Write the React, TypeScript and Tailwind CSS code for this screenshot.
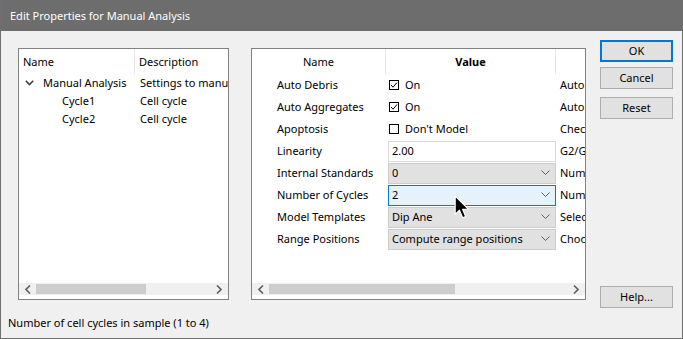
import React from 'react';

const font = { fontFamily: '"Noto Sans", "Liberation Sans", sans-serif' };

function Chevron() {
  return (
    <svg width="9" height="6" viewBox="0 0 9 6" className="shrink-0">
      <path d="M0.5 0.5 L4.5 4.5 L8.5 0.5" fill="none" stroke="#606060" strokeWidth="1" />
    </svg>
  );
}

function TreeChevron() {
  return (
    <svg width="9" height="6" viewBox="0 0 9 6" className="shrink-0">
      <path d="M0.8 0.8 L4.5 4.5 L8.2 0.8" fill="none" stroke="#404040" strokeWidth="1.6" />
    </svg>
  );
}

function CheckBox({ checked }: { checked: boolean }) {
  return (
    <svg width="10" height="10" viewBox="0 0 10 10" className="shrink-0">
      <rect x="0.5" y="0.5" width="9" height="9" fill="none" stroke="#000" strokeWidth="1" />
      {checked && <path d="M2 5 L4 7.2 L8 2.5" fill="none" stroke="#000" strokeWidth="1" />}
    </svg>
  );
}

function HScroll({ thumbLeft, thumbWidth }: { thumbLeft: number; thumbWidth: number }) {
  return (
    <div className="relative h-[12px] bg-[#f0f0f0] flex items-center justify-between px-[6px] shrink-0">
      <svg width="6" height="9" viewBox="0 0 6 9">
        <path d="M5 0.5 L1 4.5 L5 8.5" fill="none" stroke="#606060" strokeWidth="1.6" />
      </svg>
      <div
        className="absolute top-[1px] h-[10px] bg-[#cdcdcd]"
        style={{ left: thumbLeft, width: thumbWidth }}
      />
      <svg width="6" height="9" viewBox="0 0 6 9">
        <path d="M1 0.5 L5 4.5 L1 8.5" fill="none" stroke="#606060" strokeWidth="1.6" />
      </svg>
    </div>
  );
}

const props = [
  { name: 'Auto Debris', kind: 'check', checked: true, value: 'On', desc: 'Automatic' },
  { name: 'Auto Aggregates', kind: 'check', checked: true, value: 'On', desc: 'Automatic' },
  { name: 'Apoptosis', kind: 'check', checked: false, value: "Don't Model", desc: 'Check' },
  { name: 'Linearity', kind: 'text', value: '2.00', desc: 'G2/G1' },
  { name: 'Internal Standards', kind: 'select', value: '0', desc: 'Number' },
  { name: 'Number of Cycles', kind: 'active', value: '2', desc: 'Number' },
  { name: 'Model Templates', kind: 'select', value: 'Dip Ane', desc: 'Select' },
  { name: 'Range Positions', kind: 'select', value: 'Compute range positions', desc: 'Choose' },
];

function ValueCell({ p }: { p: (typeof props)[number] }) {
  if (p.kind === 'check') {
    return (
      <div className="flex items-center gap-[6px] pl-[2px] h-full">
        <CheckBox checked={!!p.checked} />
        <span>{p.value}</span>
      </div>
    );
  }
  if (p.kind === 'text') {
    return (
      <div className="h-[21px] mx-[1px] border border-[#d9d9d9] bg-white flex items-center pl-[3px]">
        {p.value}
      </div>
    );
  }
  const active = p.kind === 'active';
  return (
    <div
      className={
        active
          ? 'h-[21px] mx-[1px] border border-[#0078d7] bg-[#e5f1fb] flex items-center justify-between pl-[3px] pr-[5px]'
          : 'h-[21px] mx-[1px] border border-[#cccccc] bg-[#e1e1e1] flex items-center justify-between pl-[3px] pr-[5px]'
      }
    >
      <span className="whitespace-nowrap">{p.value}</span>
      <Chevron />
    </div>
  );
}

function Button({ label, primary }: { label: string; primary?: boolean }) {
  return (
    <div
      className={
        primary
          ? 'w-[73px] h-[22px] border-2 border-[#0078d7] bg-[#e1e1e1] flex items-center justify-center shrink-0'
          : 'w-[73px] h-[22px] border border-[#adadad] bg-[#e1e1e1] flex items-center justify-center shrink-0'
      }
    >
      {label}
    </div>
  );
}

export default function App() {
  return (
    <div
      className="relative w-[683px] h-[339px] bg-[#f0f0f0] border-l border-r border-b border-[#6f6f6f] flex flex-col text-[11px] leading-[16px] text-black overflow-hidden"
      style={font}
    >
      {/* Title bar */}
      <div className="h-[31px] bg-[#6d6d6d] text-white flex items-center pl-[9px] shrink-0 text-[11px]">
        Edit Properties for Manual Analysis
      </div>

      <div className="flex items-start pl-[17px] shrink-0">
        {/* Tree panel */}
        <div className="mt-[17px] w-[211px] h-[252px] shrink-0 border border-[#828282] bg-white flex flex-col overflow-hidden">
          <div className="flex h-[25px] shrink-0">
            <div className="w-[116px] shrink-0 border-r border-[#e5e5e5] flex items-center pl-[4px]">Name</div>
            <div className="flex items-center pl-[4px] whitespace-nowrap">Description</div>
          </div>
          <div className="flex h-[18px] items-center shrink-0">
            <div className="w-[117px] shrink-0 flex items-center pl-[6px] gap-[9px] whitespace-nowrap">
              <TreeChevron />
              <span>Manual Analysis</span>
            </div>
            <div className="pl-[4px] whitespace-nowrap">Settings to manual</div>
          </div>
          {['Cycle1', 'Cycle2'].map((c) => (
            <div key={c} className="flex h-[18px] items-center shrink-0">
              <div className="w-[117px] shrink-0 pl-[43px]">{c}</div>
              <div className="pl-[4px] whitespace-nowrap">Cell cycle</div>
            </div>
          ))}
          <div className="flex-1" />
          <HScroll thumbLeft={17} thumbWidth={110} />
          <div className="h-[4px] shrink-0" />
        </div>

        {/* Properties grid */}
        <div className="ml-[22px] mt-[17px] w-[335px] h-[252px] shrink-0 border border-[#828282] bg-white flex flex-col overflow-hidden">
          <div className="flex h-[25px] shrink-0">
            <div className="w-[134px] shrink-0 border-r border-[#e5e5e5] flex items-center justify-center">Name</div>
            <div className="w-[170px] shrink-0 border-r border-[#e5e5e5] flex items-center justify-center font-bold">Value</div>
          </div>
          {props.map((p) => (
            <div key={p.name} className="flex h-[22px] items-center shrink-0">
              <div className="w-[135px] shrink-0 pl-[25px] whitespace-nowrap">{p.name}</div>
              <div className="w-[170px] shrink-0 h-full flex flex-col justify-center">
                <ValueCell p={p} />
              </div>
              <div className="pl-[3px] whitespace-nowrap">{p.desc}</div>
            </div>
          ))}
          <div className="flex-1" />
          <HScroll thumbLeft={17} thumbWidth={186} />
          <div className="h-[4px] shrink-0" />
        </div>

        {/* Buttons */}
        <div className="ml-[14px] mt-[9px] h-[268px] shrink-0 flex flex-col">
          <Button label="OK" primary />
          <div className="h-[5px] shrink-0" />
          <Button label="Cancel" />
          <div className="h-[8px] shrink-0" />
          <Button label="Reset" />
          <div className="flex-1" />
          <Button label="Help..." />
        </div>
      </div>

      {/* Status line */}
      <div className="pl-[7px] mt-[7px]">Number of cell cycles in sample (1 to 4)</div>

      {/* Mouse cursor */}
      <svg
        className="absolute left-[453px] top-[195px]"
        width="16"
        height="25"
        viewBox="0 0 14 22"
      >
        <path
          d="M1 1 L1 17 L4.8 13.4 L7.6 20 L10.2 18.9 L7.5 12.5 L12.6 12.5 Z"
          fill="#000"
          stroke="#fff"
          strokeWidth="1"
          strokeLinejoin="round"
        />
      </svg>
    </div>
  );
}
